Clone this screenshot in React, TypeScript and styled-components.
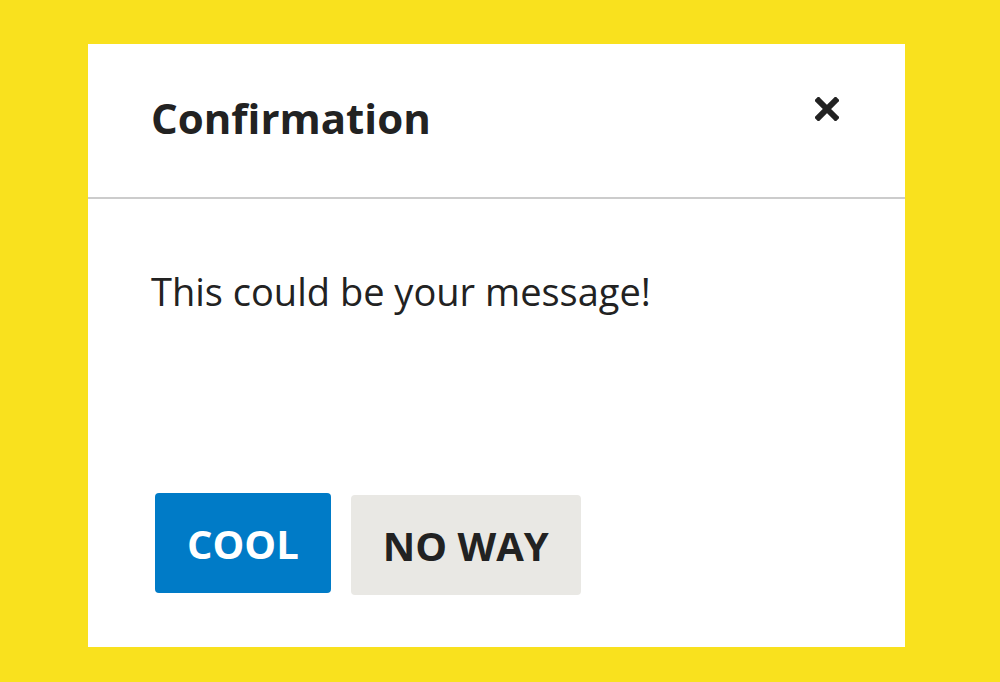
import styled, { createGlobalStyle } from "styled-components";

const GlobalStyle = createGlobalStyle`
  html, body {
    margin: 0;
    padding: 0;
    background: #f9e11e;
    font-family: "Open Sans", "Noto Sans", sans-serif;
  }
`;

const SPage = styled.div`
  width: 1000px;
  height: 682px;
  padding: 44px 0 0 88px;
  box-sizing: border-box;
`;

const SDialog = styled.div`
  width: 817px;
  height: 603px;
  background: #ffffff;
  display: flex;
  flex-direction: column;
`;

const SHeader = styled.div`
  height: 153px;
  border-bottom: 2px solid #cccccc;
  display: flex;
  align-items: center;
  justify-content: space-between;
  padding: 0 66px 0 63px;
`;

const STitle = styled.h2`
  margin: -6px 0 0;
  font-size: 42px;
  font-weight: 700;
  color: #222222;
`;

const SClose = styled.button`
  border: none;
  background: none;
  padding: 0;
  width: 24px;
  height: 24px;
  margin-top: -24px;
  cursor: pointer;
  display: flex;
`;

const SBody = styled.div`
  flex: 1;
  display: flex;
  flex-direction: column;
  justify-content: space-between;
  padding: 66px 63px 52px;
`;

const SMessage = styled.p`
  margin: 0;
  font-size: 38px;
  color: #222222;
`;

const SActions = styled.div`
  display: flex;
  align-items: flex-start;
  gap: 20px;
  padding-left: 4px;
`;

const SButton = styled.button<{ $primary?: boolean }>`
  border: none;
  border-radius: 4px;
  height: 100px;
  padding: 0 32px;
  font-family: inherit;
  font-size: 40px;
  font-weight: 700;
  cursor: pointer;
  background: ${(p) => (p.$primary ? "#007bc7" : "#e9e8e4")};
  color: ${(p) => (p.$primary ? "#ffffff" : "#222222")};
  margin-top: ${(p) => (p.$primary ? "0" : "2px")};
`;

export default function App() {
  return (
    <>
      <GlobalStyle />
      <SPage>
        <SDialog>
          <SHeader>
            <STitle>Confirmation</STitle>
            <SClose aria-label="close">
              <svg width="24" height="24" viewBox="0 0 24 24">
                <path
                  d="M3.5 3.5 L20.5 20.5 M20.5 3.5 L3.5 20.5"
                  stroke="#222222"
                  strokeWidth="6"
                  strokeLinecap="square"
                />
              </svg>
            </SClose>
          </SHeader>
          <SBody>
            <SMessage>This could be your message!</SMessage>
            <SActions>
              <SButton $primary>COOL</SButton>
              <SButton>NO WAY</SButton>
            </SActions>
          </SBody>
        </SDialog>
      </SPage>
    </>
  );
}
